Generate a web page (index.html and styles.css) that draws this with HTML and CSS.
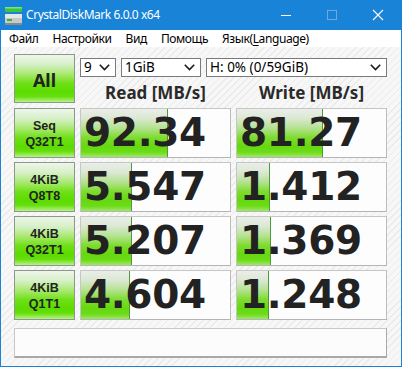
FILE: index.html
```html
<!DOCTYPE html>
<html>
<head>
<meta charset="utf-8">
<link rel="stylesheet" href="styles.css">
</head>
<body>
<div class="window">
  <div class="titlebar">
    <svg class="appicon" width="17" height="18" viewBox="0 0 17 18">
      <rect x="0" y="0" width="17" height="5" fill="#3cc43c"/>
      <rect x="0" y="0" width="17" height="1.5" fill="#7ee07e"/>
      <rect x="0" y="7" width="17" height="11" rx="1" fill="#c8c8c8"/>
      <rect x="0" y="7" width="17" height="4" fill="#e6e6e6"/>
      <rect x="0" y="16" width="17" height="2" fill="#8a8a8a"/>
      <rect x="2" y="12" width="5" height="2" fill="#2fb82f"/>
    </svg>
    <span class="title">CrystalDiskMark 6.0.0 x64</span>
    <div class="controls">
      <svg class="ctl" width="46" height="30" viewBox="0 0 46 30"><rect x="18" y="15" width="10" height="1" fill="#fff"/></svg>
      <svg class="ctl" width="46" height="30" viewBox="0 0 46 30"><rect x="18.5" y="10.5" width="9" height="9" fill="none" stroke="#6fa9e0" stroke-width="1"/></svg>
      <svg class="ctl" width="46" height="30" viewBox="0 0 46 30"><path d="M18 10 L28 20 M28 10 L18 20" stroke="#fff" stroke-width="1.1"/></svg>
    </div>
  </div>
  <div class="menubar">
    <span class="mi">Файл</span>
    <span class="mi">Настройки</span>
    <span class="mi">Вид</span>
    <span class="mi">Помощь</span>
    <span class="mi">Язык(<u>L</u>anguage)</span>
  </div>
  <div class="client">
    <div class="grid">
      <div class="btn all">All</div>
      <div class="head">
        <div class="selects">
          <div class="sel s1"><span>9</span><svg width="11" height="7" viewBox="0 0 11 7"><path d="M0.8 0.8 L5.5 5.5 L10.2 0.8" fill="none" stroke="#1a1a1a" stroke-width="1.6"/></svg></div>
          <div class="sel s2"><span>1GiB</span><svg width="11" height="7" viewBox="0 0 11 7"><path d="M0.8 0.8 L5.5 5.5 L10.2 0.8" fill="none" stroke="#1a1a1a" stroke-width="1.6"/></svg></div>
          <div class="sel s3"><span>H: 0% (0/59GiB)</span><svg width="11" height="7" viewBox="0 0 11 7"><path d="M0.8 0.8 L5.5 5.5 L10.2 0.8" fill="none" stroke="#1a1a1a" stroke-width="1.6"/></svg></div>
        </div>
        <div class="heads">
          <div class="h">Read [MB/s]</div>
          <div class="h">Write [MB/s]</div>
        </div>
      </div>

      <div class="btn label"><span class="ln">Seq</span><span class="ln">Q32T1</span></div>
      <div class="val"><div class="bar" style="width:87px"></div><span class="num">92.34</span></div>
      <div class="val"><div class="bar" style="width:86px"></div><span class="num">81.27</span></div>

      <div class="btn label"><span class="ln">4KiB</span><span class="ln">Q8T8</span></div>
      <div class="val"><div class="bar" style="width:51px"></div><span class="num">5.547</span></div>
      <div class="val"><div class="bar" style="width:33px"></div><span class="num">1.412</span></div>

      <div class="btn label"><span class="ln">4KiB</span><span class="ln">Q32T1</span></div>
      <div class="val"><div class="bar" style="width:51px"></div><span class="num">5.207</span></div>
      <div class="val"><div class="bar" style="width:34px"></div><span class="num">1.369</span></div>

      <div class="btn label"><span class="ln">4KiB</span><span class="ln">Q1T1</span></div>
      <div class="val"><div class="bar" style="width:49px"></div><span class="num">4.604</span></div>
      <div class="val"><div class="bar" style="width:32px"></div><span class="num">1.248</span></div>
    </div>
    <div class="comment"></div>
  </div>
</div>
</body>
</html>
```

FILE: styles.css
```css
* { box-sizing: border-box; }
html, body { margin: 0; padding: 0; }
body { width: 402px; height: 367px; overflow: hidden; font-family: "Noto Sans", "DejaVu Sans", sans-serif; }

.window {
  width: 402px;
  height: 367px;
  border: 1px solid #1883d7;
  border-top: none;
  display: flex;
  flex-direction: column;
  background-color: #f6f6f6;
  background-image: repeating-linear-gradient(135deg, #f7f7f7 0px, #f7f7f7 4px, #ebebeb 4px, #ebebeb 5px);
}

.titlebar {
  height: 30px;
  background: #1883d7;
  display: flex;
  align-items: center;
  margin: 0 -1px;
  padding-left: 5px;
  color: #fff;
}
.appicon { margin-right: 4px; margin-top: 1px; }
.title { font-size: 12px; letter-spacing: -0.45px; flex: 1; margin-top: -1px; }
.controls { display: flex; height: 30px; margin-right: 1px; }
.ctl { display: block; }

.menubar {
  height: 17px;
  background: #fff;
  display: flex;
  align-items: center;
  padding-left: 8px;
  gap: 14px;
  font-size: 12px;
  letter-spacing: -0.4px;
  color: #000;
}
.mi { line-height: 17px; }
.mi u { text-decoration: underline; text-underline-offset: 2px; }

.client {
  padding: 7px 13px 0 13px;
  display: flex;
  flex-direction: column;
}

.grid {
  display: grid;
  grid-template-columns: 61px 151px 151px;
  grid-auto-rows: 50px;
  column-gap: 5px;
  row-gap: 4px;
}

.btn {
  border: 1px solid #8a998a;
  background: linear-gradient(to bottom, #eef6ea 0%, #d6f0c8 20%, #a6e86a 42%, #6ee016 60%, #5cdc00 78%, #66de0c 88%, #9cec5c 96%, #b8f090 100%);
  color: #222;
  font-weight: bold;
  display: flex;
  align-items: center;
  justify-content: center;
  text-align: center;
}
.all { font-size: 18px; height: 49px; padding-top: 2px; }
.label {
  flex-direction: column;
  font-family: "Liberation Sans", Arial, sans-serif;
  font-size: 12.5px;
  padding-top: 1px;
}
.ln { display: block; line-height: 16px; height: 16px; }

.head { grid-column: 2 / 4; display: flex; flex-direction: column; }
.selects { display: flex; gap: 5px; margin-top: 4px; }
.sel {
  height: 19px;
  background: #fff;
  border: 1px solid #7a7a7a;
  display: flex;
  align-items: center;
  justify-content: space-between;
  padding: 0 5px 0 3px;
  font-size: 13.5px;
  color: #000;
}
.sel span { line-height: 17px; }
.s1 { width: 36px; }
.s2 { width: 80px; }
.s3 { width: 181px; }

.heads {
  display: grid;
  grid-template-columns: 151px 151px;
  column-gap: 5px;
  margin-top: 5px;
}
.h {
  text-align: center;
  font-weight: bold;
  font-size: 17px;
  line-height: 22px;
  color: #2a2a2a;
}

.val {
  position: relative;
  background: #fdfdfd;
  border: 1px solid #c6c6c6;
  border-bottom-color: #b4b4b4;
  border-right-color: #bcbcbc;
  display: flex;
  align-items: center;
  padding-left: 3px;
  overflow: hidden;
}
.bar {
  position: absolute;
  left: 0;
  top: 0;
  bottom: 0;
  background: linear-gradient(to bottom, #eaeee8 0%, #dde8d6 18%, #b4e290 40%, #7cdc2c 60%, #66d810 78%, #6cdc18 90%, #a0e868 100%);
  border-right: 1px solid #4c9a3c;
}
.num {
  position: relative;
  font-family: "DejaVu Sans", sans-serif;
  font-weight: bold;
  font-size: 39px;
  line-height: 48px;
  color: #222;
  letter-spacing: -0.3px;
}

.comment {
  margin-top: 8px;
  width: 373px;
  height: 30px;
  background: #fcfcfc;
  border: 1px solid #c8c8c8;
  border-bottom: 2px solid #a8a8a8;
  border-right-color: #a8a8a8;
}
```
